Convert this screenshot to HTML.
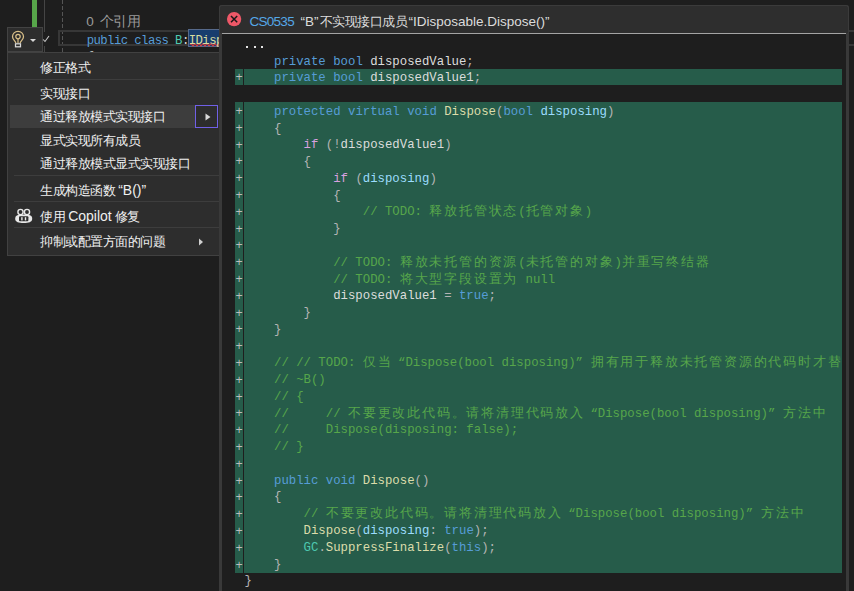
<!DOCTYPE html>
<html><head><meta charset="utf-8">
<style>
*{margin:0;padding:0;box-sizing:border-box}
html,body{width:854px;height:591px;overflow:hidden;background:#1e1e1e;position:relative;font-family:"Liberation Sans",sans-serif}
.abs{position:absolute}
.mono{font-family:"Liberation Mono",monospace}
#gbar{left:32px;top:0;width:5px;height:53px;background:#57a64a}
#dline{left:62px;top:0;width:1px;height:52px;background-image:linear-gradient(#555 66%,transparent 66%);background-size:1px 6px}
#curline{left:58px;top:30px;width:800px;height:16px;border:2px solid #373737}
#refs{left:86.2px;top:13px;font-family:"Liberation Mono",monospace;font-size:11.33px;color:#9a9a9a;white-space:pre;line-height:17px}
#refs .c{font-size:14px;letter-spacing:-0.2px}
#code0{left:86.7px;top:32.5px;font-size:12.3px;letter-spacing:-0.58px;color:#dcdcdc;white-space:pre;line-height:16px}
#sel{left:188px;top:29px;width:40px;height:18px;background:#183d6e;border:1px solid #56698a}
#bulb{left:7px;top:27px;width:36px;height:25px;background:#2d2d2d;border:1px solid #434343}
#menu{left:7px;top:52px;width:213px;height:204px;background:#2d2d2d;border:1px solid #414141}
.mi{position:absolute;left:32px;font-size:13px;letter-spacing:-0.5px;color:#f0f0f0;white-space:pre;line-height:16px}
.mi .l{font-size:14px;letter-spacing:0}
.sep{position:absolute;left:6px;width:205px;height:1px;background:#3d3d3d}
#hl{left:2px;top:52px;width:188px;height:23px;background:#3d3d3d}
#subbox{left:187px;top:52px;width:23px;height:23px;border:1.5px solid #7060e6;background:#2d2d2d}
#panel{left:219px;top:5px;width:630px;height:600px;background:#1e1e1e;border:3px solid #393939;border-top:1px solid #393939;border-radius:3px 3px 0 0}
#hdr{left:219px;top:5px;width:630px;height:28px;background:#2e2e2e;border-radius:3px 3px 0 0;border:1px solid #3b3b3b;border-bottom:none}
#hsep{left:222px;top:33px;width:624px;height:1px;background:#a4a4a4}
#htxt{top:12px;font-size:13.5px;color:#dcdcdc;white-space:pre;line-height:20px}
.g{position:absolute;background:#265c4a}
.code{position:absolute;left:244.4px;top:36.8px;width:597.6px;height:560px;overflow:hidden;font-family:"Liberation Mono",monospace;font-size:12.333px;color:#dcdcdc}
.ln{height:16.78px;line-height:16.78px;white-space:pre}
.c{font-size:13px;letter-spacing:1.8px;line-height:0}
.q{display:inline-block;line-height:0}.ql{width:13px;text-align:right}.qr{width:15.2px;text-align:left}
.k{color:#569cd6}.ck{color:#d8a0df}.m{color:#dcdcaa}.p{color:#9cdcfe}.cm{color:#57a64a}.t{color:#4ec9b0}.pu{color:#b4b4b4}
.plus{position:absolute;left:235px;width:8px;font-family:"Liberation Mono",monospace;font-size:12px;line-height:16.8px;color:#bdbdbd;text-align:center}
</style></head><body>
<div class="abs" id="gbar"></div>
<div class="abs" style="left:44px;top:0;width:1px;height:32px;background:#454545"></div>
<div class="abs" style="left:44px;top:46px;width:1px;height:6px;background:#454545"></div>
<div class="abs" id="dline"></div>
<div class="abs" id="curline"></div>
<div class="abs" id="refs"><span style="display:inline-block;width:13.4px;font-size:13.5px;font-family:'Liberation Sans',sans-serif;position:relative;top:-0.5px">0</span><span class="c">个引用</span></div>
<div class="abs" id="sel"></div>
<svg class="abs" style="left:0;top:0" width="222" height="50" viewBox="0 0 222 50"><path d="M190 44.8 q1 -2.2 2 0 q1 2.2 2 0 q1 -2.2 2 0 q1 2.2 2 0 q1 -2.2 2 0 q1 2.2 2 0 q1 -2.2 2 0 q1 2.2 2 0 q1 -2.2 2 0 q1 2.2 2 0 q1 -2.2 2 0 q1 2.2 2 0 q1 -2.2 2 0 q1 2.2 2 0 q1 -2.2 2 0 q1 2.2 2 0" fill="none" stroke="#e23b3b" stroke-width="1.1"/></svg>
<div class="abs mono" id="code0"><span class="k">public</span> <span class="k">class</span> <span class="t">B</span>:<span style="color:#d8dca0">IDisposable</span>
<span style="color:#b4b4b4">{</span></div>

<div class="abs" id="bulb"></div>
<svg class="abs" style="left:0;top:0" width="60" height="60" viewBox="0 0 60 60">
 <path d="M15.8 43 C15.8 41 12.5 39.8 12.5 36.8 A5.5 5.5 0 1 1 23.5 36.8 C23.5 39.8 20.2 41 20.2 43" fill="none" stroke="#d9bf88" stroke-width="1.25"/>
 <circle cx="18" cy="36.6" r="2.2" fill="none" stroke="#d9bf88" stroke-width="1.2"/>
 <line x1="18" y1="38.8" x2="18" y2="43" stroke="#d9bf88" stroke-width="1.2"/>
 <rect x="15.5" y="43.8" width="5" height="3" fill="none" stroke="#d8d8d8" stroke-width="1.25"/>
 <path d="M30 39 L36 39 L33 42 Z" fill="#d8d8d8"/>
 <path d="M43.2 39.5 L45 41.5 L49 36" fill="none" stroke="#c8c8c8" stroke-width="1.1"/>
</svg>

<div class="abs" id="menu">
 <div class="mi" style="top:7px">修正格式</div>
 <div class="sep" style="top:26px"></div>
 <div class="abs" id="hl"></div>
 <div class="abs" id="subbox"><svg class="abs" style="left:8.5px;top:6.5px" width="6" height="8"><path d="M0.5 0.5 L5.5 4 L0.5 7.5Z" fill="#d8d8d8"/></svg></div>
 <div class="mi" style="top:33px">实现接口</div>
 <div class="mi" style="top:56px">通过释放模式实现接口</div>
 <div class="mi" style="top:80px">显式实现所有成员</div>
 <div class="mi" style="top:103px">通过释放模式显式实现接口</div>
 <div class="sep" style="top:122px"></div>
 <div class="mi" style="top:129px">生成构造函数 <span class="l">“B()”</span></div>
 <div class="sep" style="top:148px"></div>
 <svg class="abs" style="left:-7px;top:-52px" width="40" height="280" viewBox="0 0 40 280">
  <circle cx="19.5" cy="211" r="2.6" fill="none" stroke="#e8e8e8" stroke-width="1.4"/>
  <circle cx="26" cy="211" r="2.6" fill="none" stroke="#e8e8e8" stroke-width="1.4"/>
  <path d="M14.2 218 C14.2 214.8 16 213.6 22.7 213.6 C29.4 213.6 31.2 214.8 31.2 218 C31.2 221 27.5 222 22.7 222 C17.9 222 14.2 221 14.2 218 Z" fill="#e8e8e8"/>
  <rect x="18" y="215.3" width="9.4" height="5" rx="1" fill="#2d2d2d"/>
  <rect x="20.2" y="216.2" width="1.4" height="3.2" fill="#e8e8e8"/>
  <rect x="23.8" y="216.2" width="1.4" height="3.2" fill="#e8e8e8"/>
 </svg>
 <div class="mi" style="top:155px">使用 <span class="l">Copilot</span> 修复</div>
 <div class="sep" style="top:174px"></div>
 <div class="mi" style="top:181px">抑制或配置方面的问题</div>
 <svg class="abs" style="left:191px;top:185px" width="5" height="8"><path d="M0 0.5 L4 4 L0 7.5Z" fill="#d0d0d0"/></svg>
</div>

<div class="abs" id="panel"></div>
<div class="abs" id="hdr"></div>
<div class="abs" id="hsep"></div>
<svg class="abs" style="left:226px;top:11px" width="16" height="16" viewBox="0 0 16 16"><circle cx="8.1" cy="8.1" r="7.15" fill="#ee5868"/><path d="M5 5 L11.2 11.2 M11.2 5 L5 11.2" stroke="#181818" stroke-width="1.5"/></svg>
<div class="abs" id="htxt" style="left:249.4px;color:#55a8e8;letter-spacing:-0.7px">CS0535</div>
<div class="abs" id="htxt" style="left:300.5px">“B”</div>
<div class="abs" id="htxt" style="left:319.6px;font-size:13px;letter-spacing:-0.5px">不实现接口成员</div>
<div class="abs" id="htxt" style="left:408.5px">“IDisposable.Dispose()”</div>

<div class="g" style="left:235px;top:68.5px;width:8px;height:16.8px"></div>
<div class="g" style="left:244px;top:68.5px;width:598px;height:16.8px"></div>
<div class="g" style="left:235px;top:102px;width:8px;height:471px"></div>
<div class="g" style="left:244px;top:102px;width:598px;height:471px"></div>
<div class="abs" style="left:246px;top:46px;width:2.2px;height:2.2px;background:#e6e6e6"></div><div class="abs" style="left:253.6px;top:46px;width:2.2px;height:2.2px;background:#e6e6e6"></div><div class="abs" style="left:261px;top:46px;width:2.2px;height:2.2px;background:#e6e6e6"></div>
<div class="plus" style="top:70.4px">+</div>
<div class="plus" style="top:104.0px">+</div>
<div class="plus" style="top:120.8px">+</div>
<div class="plus" style="top:137.6px">+</div>
<div class="plus" style="top:154.4px">+</div>
<div class="plus" style="top:171.2px">+</div>
<div class="plus" style="top:188.0px">+</div>
<div class="plus" style="top:204.8px">+</div>
<div class="plus" style="top:221.6px">+</div>
<div class="plus" style="top:238.4px">+</div>
<div class="plus" style="top:255.2px">+</div>
<div class="plus" style="top:272.0px">+</div>
<div class="plus" style="top:288.8px">+</div>
<div class="plus" style="top:305.6px">+</div>
<div class="plus" style="top:322.4px">+</div>
<div class="plus" style="top:339.2px">+</div>
<div class="plus" style="top:356.0px">+</div>
<div class="plus" style="top:372.8px">+</div>
<div class="plus" style="top:389.6px">+</div>
<div class="plus" style="top:406.4px">+</div>
<div class="plus" style="top:423.2px">+</div>
<div class="plus" style="top:440.0px">+</div>
<div class="plus" style="top:456.8px">+</div>
<div class="plus" style="top:473.6px">+</div>
<div class="plus" style="top:490.4px">+</div>
<div class="plus" style="top:507.2px">+</div>
<div class="plus" style="top:524.0px">+</div>
<div class="plus" style="top:540.8px">+</div>
<div class="plus" style="top:557.6px">+</div>
<div class="code">
<div class="ln"></div>
<div class="ln">    <span class="k">private</span> <span class="k">bool</span> disposedValue<span class="pu">;</span></div>
<div class="ln">    <span class="k">private</span> <span class="k">bool</span> disposedValue1<span class="pu">;</span></div>
<div class="ln"></div>
<div class="ln">    <span class="k">protected</span> <span class="k">virtual</span> <span class="k">void</span> <span class="m">Dispose</span><span class="pu">(</span><span class="k">bool</span> <span class="p">disposing</span><span class="pu">)</span></div>
<div class="ln">    <span class="pu">{</span></div>
<div class="ln">        <span class="ck">if</span> <span class="pu">(!</span>disposedValue1<span class="pu">)</span></div>
<div class="ln">        <span class="pu">{</span></div>
<div class="ln">            <span class="ck">if</span> <span class="pu">(</span><span class="p">disposing</span><span class="pu">)</span></div>
<div class="ln">            <span class="pu">{</span></div>
<div class="ln">                <span class="cm">// TODO: <span class="c">释放托管状态</span>(<span class="c">托管对象</span>)</span></div>
<div class="ln">            <span class="pu">}</span></div>
<div class="ln"></div>
<div class="ln">            <span class="cm">// TODO: <span class="c">释放未托管的资源</span>(<span class="c">未托管的对象</span>)<span class="c">并重写终结器</span></span></div>
<div class="ln">            <span class="cm">// TODO: <span class="c">将大型字段设置为</span> null</span></div>
<div class="ln">            disposedValue1 <span class="pu">=</span> <span class="k">true</span><span class="pu">;</span></div>
<div class="ln">        <span class="pu">}</span></div>
<div class="ln">    <span class="pu">}</span></div>
<div class="ln"></div>
<div class="ln">    <span class="cm">// // TODO: <span class="c">仅当</span><span class="q ql">“</span>Dispose(bool disposing)<span class="q qr">”</span><span class="c">拥有用于释放未托管资源的代码时才替代终结器</span></span></div>
<div class="ln">    <span class="cm">// ~B()</span></div>
<div class="ln">    <span class="cm">// {</span></div>
<div class="ln">    <span class="cm">//     // <span class="c">不要更改此代码。请将清理代码放入</span><span class="q ql">“</span>Dispose(bool disposing)<span class="q qr">”</span><span class="c">方法中</span></span></div>
<div class="ln">    <span class="cm">//     Dispose(disposing: false);</span></div>
<div class="ln">    <span class="cm">// }</span></div>
<div class="ln"></div>
<div class="ln">    <span class="k">public</span> <span class="k">void</span> <span class="m">Dispose</span><span class="pu">()</span></div>
<div class="ln">    <span class="pu">{</span></div>
<div class="ln">        <span class="cm">// <span class="c">不要更改此代码。请将清理代码放入</span><span class="q ql">“</span>Dispose(bool disposing)<span class="q qr">”</span><span class="c">方法中</span></span></div>
<div class="ln">        <span class="m">Dispose</span><span class="pu">(</span><span class="p">disposing</span><span class="pu">:</span> <span class="k">true</span><span class="pu">);</span></div>
<div class="ln">        <span class="t">GC</span><span class="pu">.</span><span class="m">SuppressFinalize</span><span class="pu">(</span><span class="k">this</span><span class="pu">);</span></div>
<div class="ln">    <span class="pu">}</span></div>
<div class="ln"><span class="pu">}</span></div>
</div>
</body></html>
